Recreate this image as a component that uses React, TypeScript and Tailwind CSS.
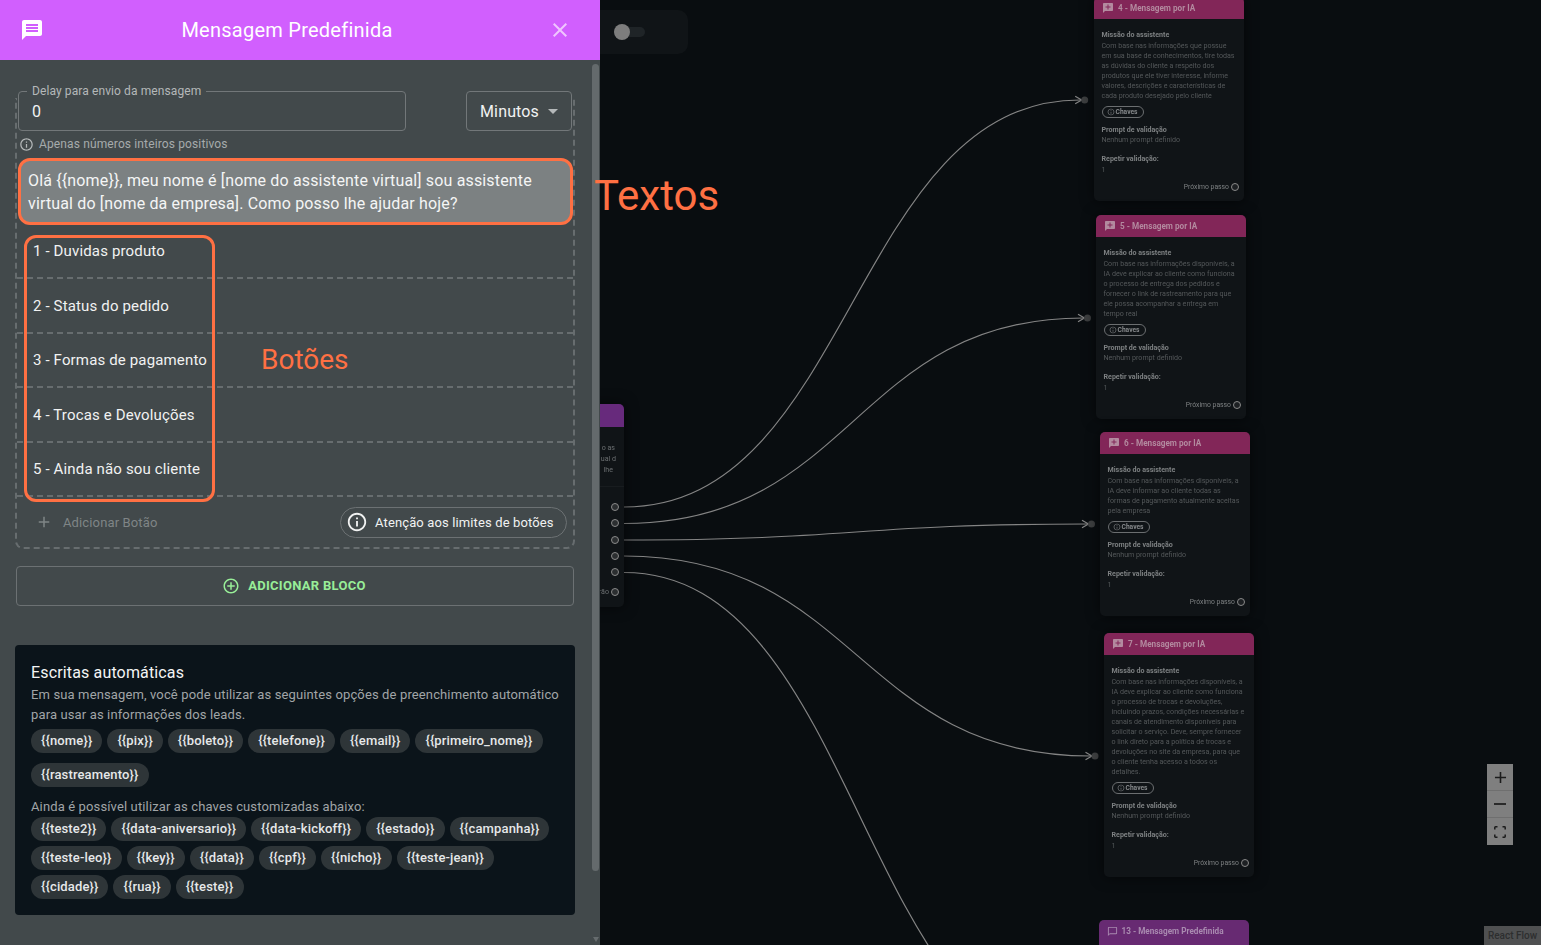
import React from "react";

const P = {
  msg: "M20 2H4c-1.1 0-1.99.9-1.99 2L2 22l4-4h14c1.1 0 2-.9 2-2V4c0-1.1-.9-2-2-2zm-2 12H6v-2h12v2zm0-3H6V9h12v2zm0-3H6V6h12v2z",
  close: "M19 6.41 17.59 5 12 10.59 6.41 5 5 6.41 10.59 12 5 17.59 6.41 19 12 13.41 17.59 19 19 17.59 13.41 12z",
  info: "M11 7h2v2h-2zm0 4h2v6h-2zm1-9C6.48 2 2 6.48 2 12s4.48 10 10 10 10-4.48 10-10S17.52 2 12 2zm0 18c-4.41 0-8-3.59-8-8s3.59-8 8-8 8 3.59 8 8-3.59 8-8 8z",
  addCircle: "M13 7h-2v4H7v2h4v4h2v-4h4v-2h-4V7zm-1-5C6.48 2 2 6.48 2 12s4.48 10 10 10 10-4.48 10-10S17.52 2 12 2zm0 18c-4.41 0-8-3.59-8-8s3.59-8 8-8 8 3.59 8 8-3.59 8-8 8z",
  plus: "M19 13h-6v6h-2v-6H5v-2h6V5h2v6h6v2z",
  addComment: "M20 2H4c-1.1 0-1.99.9-1.99 2L2 22l4-4h14c1.1 0 2-.9 2-2V4c0-1.1-.9-2-2-2zm-3 9h-4v4h-2v-4H7V9h4V5h2v4h4v2z",
  bubble: "M20 2H4c-1.1 0-2 .9-2 2v18l4-4h14c1.1 0 2-.9 2-2V4c0-1.1-.9-2-2-2zm0 14H6l-2 2V4h16v12z",
};

function Icon({ d, className }: { d: string; className: string }) {
  return (
    <svg viewBox="0 0 24 24" fill="currentColor" className={className}>
      <path d={d} />
    </svg>
  );
}

function Chip({ t }: { t: string }) {
  return (
    <span className="h-[24px] px-[10px] rounded-full bg-[#2e3538] text-[#e6e8e9] text-[13px] tracking-[0.14px] font-medium leading-[24px] whitespace-nowrap">
      {t}
    </span>
  );
}

const buttons = ["1 - Duvidas produto", "2 - Status do pedido", "3 - Formas de pagamento", "4 - Trocas e Devoluções", "5 - Ainda não sou cliente"];

function Panel() {
  return (
    <div className="relative w-[600px] h-[945px] shrink-0 bg-[#42494b] flex flex-col overflow-hidden">
      <header className="h-[60px] shrink-0 bg-[#d15ffe] flex items-center relative">
        <Icon d={P.msg} className="w-[24px] h-[24px] ml-[20px] text-white" />
        <div className="absolute left-0 w-[574px] text-center text-white text-[20px] tracking-[0.25px]">Mensagem Predefinida</div>
        <Icon d={P.close} className="absolute left-[548px] top-[18px] w-[24px] h-[24px] text-[#efc6fe]" />
      </header>

      {/* scrollbar */}
      <div className="absolute left-[592px] top-[64px] w-[7px] h-[807px] rounded-full bg-[#646a6c]" />
      <div className="absolute left-[593px] top-[937px] w-0 h-0 border-l-[3px] border-r-[3px] border-t-[5px] border-l-transparent border-r-transparent border-t-[#666c6e]" />

      <div className="pl-[16px] pr-[26px] pt-[31px] flex flex-col">
        <div className="relative z-10 flex items-start pl-[2px] pr-[2px] justify-between">
          <div className="relative w-[388px] h-[40px] border border-[#727779] rounded-[4px] bg-[#42494b] flex items-center pl-[13px] pt-[1px]">
            <span className="absolute left-[8px] -top-[8px] px-[5px] bg-[#42494b] text-[12px] tracking-[0.1px] leading-[14px] text-[#b4b8b9]">Delay para envio da mensagem</span>
            <span className="text-[16px] text-[#f1f2f2]">0</span>
          </div>
          <div className="w-[106px] h-[40px] border border-[#727779] rounded-[4px] bg-[#42494b] flex items-center pl-[13px] pt-[1px] relative">
            <span className="text-[16px] tracking-[0.15px] text-[#f1f2f2]">Minutos</span>
            <span className="absolute left-[81px] top-[17px] w-0 h-0 border-l-[5px] border-r-[5px] border-t-[5px] border-l-transparent border-r-transparent border-t-[#b4b8b9]" />
          </div>
        </div>

        <div className="relative -mt-[33px] border-x-2 border-b-2 border-dashed border-[#676d6f] rounded-b-[8px] h-[451px] flex flex-col pt-[38px] -ml-[1px] -mr-[1px]">
          <div className="flex items-center h-[16px] pl-[2px]">
            <Icon d={P.info} className="w-[15px] h-[15px] text-[#b4b8b9]" />
            <span className="ml-[5px] text-[12px] tracking-[0.13px] text-[#a6abac]">Apenas números inteiros positivos</span>
          </div>
          <div className="mt-[6px] ml-[1px] h-[67px] w-[555px] border-[3px] border-[#ff7043] rounded-[12px] bg-[#7c8182] px-[7px] pt-[8px] text-[16px] tracking-[0.15px] leading-[23px] text-[#f4f5f5]">
            Olá {"{{nome}}"}, meu nome é [nome do assistente virtual] sou assistente virtual do [nome da empresa]. Como posso lhe ajudar hoje?
          </div>
          <div className="-mt-[0.5px] flex flex-col">
            {buttons.map((b) => (
              <div key={b} className="h-[54.5px] border-b-2 border-dashed border-[#676d6f] flex items-center pl-[16px] pt-[1px] text-[15px] tracking-[0.15px] text-[#f1f2f2] whitespace-nowrap">
                {b}
              </div>
            ))}
          </div>
          <div className="flex-1 flex items-center pl-[18px] pr-[6px]">
            <Icon d={P.plus} className="w-[18px] h-[18px] text-[#7f8586]" />
            <span className="ml-[10px] pt-[1px] text-[13px] tracking-[0.13px] text-[#7f8586]">Adicionar Botão</span>
            <div className="ml-auto h-[31px] w-[227px] border border-[#6c7173] rounded-full flex items-center pl-[5px] text-[13px] tracking-[0.13px] text-[#f1f2f2] whitespace-nowrap">
              <Icon d={P.info} className="w-[22px] h-[22px] text-[#f1f2f2]" />
              <span className="ml-[7px] pt-[1px]">Atenção aos limites de botões</span>
            </div>
          </div>
          {/* destaque dos botões */}
          <div className="absolute left-[7px] top-[137px] w-[191px] h-[267px] border-[3px] border-[#ff7043] rounded-[12px]" />
          <div className="absolute left-[244px] top-[242px] text-[28px] leading-[40px] text-[#ff7043]">Botões</div>
        </div>

        <div className="mt-[17px] h-[40px] w-[558px] border border-[#6c7173] rounded-[4px] flex items-center justify-center gap-[8px]">
          <Icon d={P.addCircle} className="w-[18px] h-[18px] text-[#98ee98] -ml-[2px]" />
          <span className="text-[13px] font-bold text-[#98ee98] tracking-[0.3px]">ADICIONAR BLOCO</span>
        </div>

        <section className="mt-[39px] -ml-[1px] w-[560px] h-[270px] rounded-[4px] bg-[#0b141a] pl-[16px] pr-[10px] pt-[16px]">
          <h2 className="text-[16px] tracking-[0.15px] leading-[23px] text-[#f4f5f5]">Escritas automáticas</h2>
          <p className="mt-[1px] text-[13px] tracking-[0.13px] leading-[20px] text-[#a1a5a7]">Em sua mensagem, você pode utilizar as seguintes opções de preenchimento automático para usar as informações dos leads.</p>
          <div className="mt-[4px] flex flex-wrap gap-x-[5px] gap-y-[10px]">
            {["{{nome}}", "{{pix}}", "{{boleto}}", "{{telefone}}", "{{email}}", "{{primeiro_nome}}", "{{rastreamento}}"].map((c) => (
              <Chip key={c} t={c} />
            ))}
          </div>
          <p className="mt-[10px] text-[13px] tracking-[0.13px] leading-[20px] text-[#a1a5a7]">Ainda é possível utilizar as chaves customizadas abaixo:</p>
          <div className="flex flex-wrap gap-x-[5px] gap-y-[5px]">
            {["{{teste2}}", "{{data-aniversario}}", "{{data-kickoff}}", "{{estado}}", "{{campanha}}", "{{teste-leo}}", "{{key}}", "{{data}}", "{{cpf}}", "{{nicho}}", "{{teste-jean}}", "{{cidade}}", "{{rua}}", "{{teste}}"].map((c) => (
              <Chip key={c} t={c} />
            ))}
          </div>
        </section>
      </div>
    </div>
  );
}

const nodes = [
  {
    n: "4", x: 494, y: -3,
    lines: ["Com base nas informações que possue", "em sua base de conhecimentos, tire todas", "as dúvidas do cliente a respeito dos", "produtos que ele tiver interesse, informe", "valores, descrições e características de", "cada produto desejado pelo cliente"],
  },
  {
    n: "5", x: 496, y: 215,
    lines: ["Com base nas informações disponíveis, a", "IA deve explicar ao cliente como funciona", "o processo de entrega dos pedidos e", "fornecer o link de rastreamento para que", "ele possa acompanhar a entrega em", "tempo real"],
  },
  {
    n: "6", x: 500, y: 432,
    lines: ["Com base nas informações disponíveis, a", "IA deve informar ao cliente todas as", "formas de pagamento atualmente aceitas", "pela empresa"],
  },
  {
    n: "7", x: 504, y: 633,
    lines: ["Com base nas informações disponíveis, a", "IA deve explicar ao cliente como funciona", "o processo de trocas e devoluções,", "incluindo prazos, condições necessárias e", "canais de atendimento disponíveis para", "solicitar o serviço. Deve, sempre fornecer", "o link direto para a política de trocas e", "devoluções no site da empresa, para que", "o cliente tenha acesso a todos os", "detalhes."],
  },
];

function FlowNode({ n, x, y, lines }: { n: string; x: number; y: number; lines: string[] }) {
  return (
    <div style={{ left: x, top: y }} className="absolute w-[150px] rounded-[5px] bg-[#101417] shadow-[0_0_14px_rgba(0,0,0,0.6)] overflow-hidden will-change-transform">
      <div className="h-[22px] bg-[#822658] flex items-center pl-[7.5px] text-[#b38a9f]">
        <Icon d={P.addComment} className="w-[12px] h-[12px]" />
        <span className="ml-[4.5px] text-[8.2px] font-bold whitespace-nowrap">{n} - Mensagem por IA</span>
      </div>
      <div className="pl-[7.5px] pr-[8px] pt-[11px] pb-[9px] text-[7.1px] leading-[10px] whitespace-nowrap">
        <div className="font-bold text-[#7d8082]">Missão do assistente</div>
        <div className="mt-[0.8px] text-[#54585a]">
          {lines.map((l) => (
            <div key={l}>{l}</div>
          ))}
        </div>
        <div className="mt-[5.5px] h-[12px] w-[42px] border border-[#6b6e70] rounded-full flex items-center pl-[4px] text-[#85888a] font-bold text-[6.7px]">
          <Icon d={P.info} className="w-[8px] h-[8px] mr-[1px] text-[#7a7d7f]" />
          Chaves
        </div>
        <div className="mt-[6.8px] font-bold text-[#7d8082]">Prompt de validação</div>
        <div className="text-[#54585a]">Nenhum prompt definido</div>
        <div className="mt-[8.6px] font-bold text-[#7d8082]">Repetir validação:</div>
        <div className="mt-[1px] text-[#54585a]">1</div>
        <div className="mt-[7.1px] -mr-[3px] flex items-center justify-end gap-[2px] text-[6.8px] text-[#7d8082]">
          Próximo passo
          <span className="w-[8px] h-[8px] rounded-full border border-[#8a8a8a] bg-[#1d2023]" />
        </div>
      </div>
    </div>
  );
}

function Handle() {
  return <span className="block w-[8px] h-[8px] rounded-full border border-[#8a8a8a] bg-[#2b2e30]" />;
}

function Canvas() {
  const edges = [
    { d: "M24 507 C 252 507 252 100 480 100", tx: 484.7, ty: 100 },
    { d: "M24 523.5 C 254 523.5 254 318 483 318", tx: 487.5, ty: 318 },
    { d: "M24 540 C 256 540 256 524 487 524", tx: 491.5, ty: 524 },
    { d: "M24 556 C 258 556 258 756 491 756", tx: 495, ty: 756 },
    { d: "M24 572.5 C 260 572.5 260 1060 495 1060", tx: 499, ty: 1060 },
  ];
  return (
    <div className="relative flex-1 h-[945px] bg-[#090d10] overflow-hidden">
      <svg className="absolute left-0 top-0 w-[941px] h-[945px]" viewBox="0 0 941 945" fill="none">
        {edges.map((e) => (
          <g key={e.d}>
            <path d={e.d} stroke="#848484" strokeWidth="1.2" />
            <path d={`M${e.tx - 9.5} ${e.ty - 3.8} L${e.tx - 3} ${e.ty} L${e.tx - 9.5} ${e.ty + 3.8}`} stroke="#848484" strokeWidth="1.2" />
            <circle cx={e.tx} cy={e.ty} r="3.5" fill="#3d3f40" />
          </g>
        ))}
      </svg>

      {/* toggle */}
      <div className="absolute -left-[100px] top-[10px] w-[188px] h-[44px] rounded-[10px] bg-[#101417]">
        <div className="absolute left-[114px] top-[17px] w-[31px] h-[10px] rounded-full bg-[#1f2427]" />
        <div className="absolute left-[114px] top-[14px] w-[16px] h-[16px] rounded-full bg-[#7d7d7d]" />
      </div>

      {/* nó cortado pelo painel */}
      <div className="absolute -left-[200px] top-[404px] w-[224px] h-[203px] rounded-[5px] bg-[#101417] shadow-[0_0_14px_rgba(0,0,0,0.6)] overflow-hidden will-change-transform">
        <div className="h-[23px] bg-[#672a7c]" />
        <div className="pt-[14.5px] pr-[9px] text-right text-[7.1px] leading-[11px] text-[#6b6f71]">
          <div>o as</div>
          <div className="-mr-[1px]">ual d</div>
          <div className="mr-[2px]">lhe</div>
        </div>
        <div className="mt-[11px] border-b border-[#181c1f]" />
        <div className="mt-[16.5px] flex flex-col items-end gap-[8.3px] pr-[5px]">
          <Handle />
          <Handle />
          <Handle />
          <Handle />
          <Handle />
        </div>
        <div className="mt-[11.5px] flex items-center justify-end gap-[2px] pr-[5px] text-[7.1px] leading-[8px] text-[#6b6f71]">
          rão <Handle />
        </div>
      </div>

      {nodes.map((n) => (
        <FlowNode key={n.n} {...n} />
      ))}

      <div className="absolute left-[499px] top-[920px] w-[150px] h-[40px] rounded-t-[5px] bg-[#672a72] text-[#a98ab0] will-change-transform">
        <div className="h-[22px] flex items-center pl-[8px]">
          <Icon d={P.bubble} className="w-[11px] h-[11px]" />
          <span className="ml-[3.5px] text-[8.2px] font-bold whitespace-nowrap">13 - Mensagem Predefinida</span>
        </div>
      </div>

      {/* controles */}
      <div className="absolute left-[887px] top-[764px] w-[26px] flex flex-col bg-[#7f7f7f] text-[#1c1c1c]">
        <div className="h-[27px] border-b border-[#6f6f6f] flex items-center justify-center">
          <Icon d={P.plus} className="w-[19px] h-[19px]" />
        </div>
        <div className="h-[27px] border-b border-[#6f6f6f] flex items-center justify-center">
          <svg viewBox="0 0 14 2" className="w-[12px] h-[2px]" fill="currentColor"><rect width="14" height="2" /></svg>
        </div>
        <div className="h-[27px] flex items-center justify-center">
          <svg viewBox="0 0 12 12" className="w-[12px] h-[12px]" fill="none" stroke="currentColor" strokeWidth="1.5">
            <path d="M.8 3.5V1.5Q.8.8 1.5.8H3.5M8.5.8h2q.7 0 .7.7V3.5M11.2 8.5v2q0 .7-.7.7H8.5M3.5 11.2h-2q-.7 0-.7-.7V8.5" />
          </svg>
        </div>
      </div>

      <div className="absolute right-0 bottom-0 w-[57px] h-[19px] bg-[#4f5051] text-[#2d2e2f] text-[10px] font-medium flex items-center justify-center whitespace-nowrap">React Flow</div>
    </div>
  );
}

export default function App() {
  return (
    <div className="relative flex w-[1541px] h-[945px] overflow-hidden [font-family:Roboto,sans-serif]">
      <Panel />
      <Canvas />
      <div className="absolute left-[594px] top-[171px] text-[42px] leading-[50px] text-[#ff7043]">Textos</div>
    </div>
  );
}
